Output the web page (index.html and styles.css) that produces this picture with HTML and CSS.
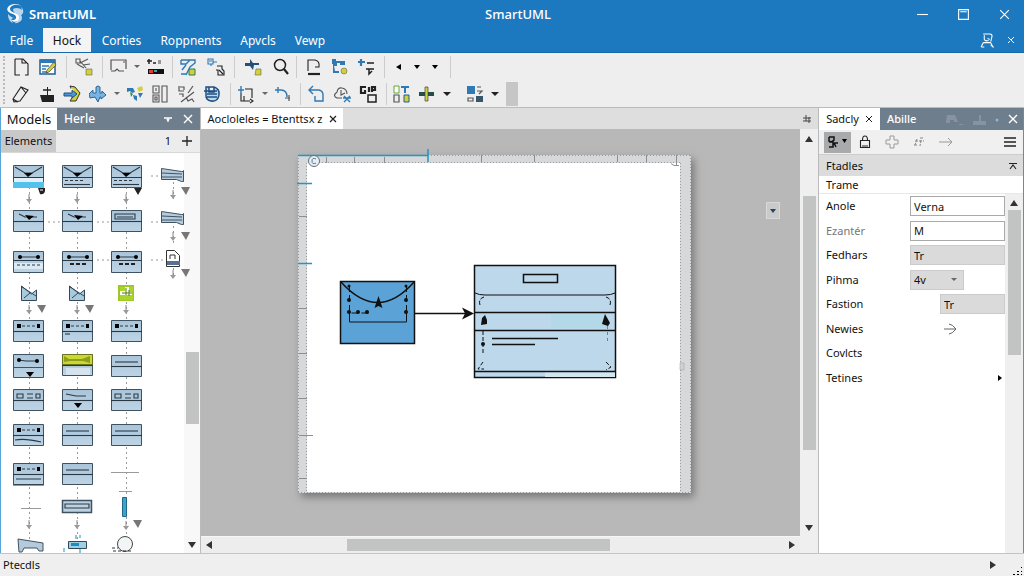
FILE: index.html
```html
<!DOCTYPE html>
<html lang="en">
<head>
<meta charset="utf-8">
<title>SmartUML</title>
<link rel="stylesheet" href="styles.css">
</head>
<body>
<div class="app">
  <header class="titlebar">
    <div class="brand">
      <svg class="logo" viewBox="0 0 18 20"><path d="M15 3C11-1 3 1 3 5c0 5 12 3 11 9-1 4-7 5-11 2 7 1 8-4 3-6C1 9-1 6 1 3 4-1 12-1 15 3z" fill="#fff"/><path d="M6 5c3-2 7-1 9 1l-1-3c3 2 3 7 0 8 3 4-1 9-7 8 5-2 6-5 4-8-2-2-5-2-5-6zM1 10c0 5 2 8 5 9-3-4-1-5 2-5-3 0-5-2-7-4z" fill="#b9d6ee"/></svg>
      <span>SmartUML</span>
    </div>
    <h1 class="title">SmartUML</h1>
    <div class="window-buttons">
      <button aria-label="Minimize"><svg viewBox="0 0 12 12"><path d="M1 6h10"/></svg></button>
      <button aria-label="Maximize"><svg viewBox="0 0 12 12"><path d="M1.500 1.500h9v9h-9zM3 3.500h6"/></svg></button>
      <button aria-label="Close"><svg viewBox="0 0 12 12"><path d="M2 2l8 8M10 2l-8 8"/></svg></button>
    </div>
  </header>

  <nav class="menubar">
    <button class="menu m-file">Fdle</button>
    <button class="menu m-home active">Hock</button>
    <button class="menu m-cort">Corties</button>
    <button class="menu m-ropp">Roppnents</button>
    <button class="menu m-apvc">Apvcls</button>
    <button class="menu m-view">Vewp</button>
    <div class="menu-right">
      <button aria-label="Account"><svg class="ic-user" viewBox="0 0 14 14"><path d="M3 1h6q3 0 2 3l-1 4M4 2v4q1 2 4 1M7 5l2 1M3 9h7M3 9l-2 4M10 9l2 4h1M1 13h3M10 11l2 2"/></svg></button>
      <button aria-label="Collapse"><svg class="ic-small" viewBox="0 0 8 8"><path d="M1 1l6 6M7 1L4 4M1 7l2-2"/></svg></button>
    </div>
  </nav>

  <div class="toolbar" role="toolbar">
    <div class="tool-row">
      <button class="tool" aria-label="New"><svg viewBox="0 0 20 20"><path class="k thin" d="M4 2h8l5 5v11h-3M4 2v16h5M11 2v4h4"/></svg></button>
      <button class="tool" aria-label="Edit"><svg viewBox="0 0 20 20"><path fill="#fff" stroke="#1f5f97" stroke-width="1.500" d="M3 3h15v14H3z"/><path class="bf" d="M3 2h15v4H3z"/><path class="b" d="M5 9h7M5 12h4M5 15h6"/><path class="y" stroke="#333" stroke-width=".6" d="M10 13l7-8 2 3-7 7-3 1z"/></svg></button>
      <i class="sep wide"></i>
      <button class="tool" aria-label="Link"><svg viewBox="0 0 20 20"><path class="g thin" d="M1 2h4v4H1zM5 6l8-4M5 4l6 7M8 8l7-1M2 7l7 4"/><path class="y" stroke="#665" stroke-width=".6" d="M11 12h6v6h-6z"/></svg></button>
      <i class="sep"></i>
      <button class="tool" aria-label="Shape"><svg viewBox="0 0 20 20"><path class="g" d="M2 13V3h15v9M2 14h4l2-2 2 2h5M14 5h2"/></svg></button>
      <i class="caret soft"></i>
      <button class="tool" aria-label="Color"><svg viewBox="0 0 20 20"><path class="k" d="M2 4h5M4 2v5M8 6h3"/><path fill="#999" d="M13 3h3v4h-3z"/><path fill="#111" d="M3 12h16v5H3z"/><path fill="#e5402f" d="M4 13h4v3H4z"/><path fill="#3aa6b5" d="M9 13h3v2H9z"/></svg></button>
      <i class="sep"></i>
      <button class="tool" aria-label="Diagram"><svg viewBox="0 0 20 20"><path class="b" d="M2 3h14v3l-5 4-4 8M2 3v4h5l4-4M3 13l4-5M2 17h5"/><path class="y" stroke="#2a7a5a" d="M10 12h6v6h-6z"/></svg></button>
      <button class="tool" aria-label="Relation"><svg viewBox="0 0 20 20"><path class="b thin" d="M3 2h5v5H3zM4 4h3M8 5h4M6 7v2"/><path class="k thin" d="M12 9h5v3l2 2v4h-6v-5h-2M14 13l4 4"/></svg></button>
      <i class="sep wide"></i>
      <button class="tool" aria-label="Add"><svg viewBox="0 0 20 20"><path fill="#234f7a" d="M2 6h5V2l3 4h6v2h-5l-1 5-3-4H2z"/><path class="y" stroke="#665" stroke-width=".6" d="M13 12h5v6h-6z"/></svg></button>
      <button class="tool" aria-label="Search"><svg viewBox="0 0 20 20"><circle class="k" cx="11" cy="8" r="5.500"/><path class="k heavy" d="M15 12l4 5"/></svg></button>
      <i class="sep"></i>
      <button class="tool" aria-label="Page"><svg viewBox="0 0 20 20"><path class="k thin" d="M5 14V3h7q5 1 4 7h-4"/><path class="k heavy" d="M5 17h12"/></svg></button>
      <button class="tool" aria-label="Tree"><svg viewBox="0 0 20 20"><path class="bf" d="M3 2h4v2h9v4h-5V6H8v3H5l1 5h4v2H4V7H3z"/><circle class="y" stroke="#665" stroke-width=".6" cx="15" cy="14" r="3"/></svg></button>
      <button class="tool" aria-label="Insert"><svg viewBox="0 0 20 20"><path class="b heavy" d="M3 5h7M6 2v7"/><path class="k" d="M12 6h7M11 12h8M14 12v5l3-3"/></svg></button>
      <i class="sep wide"></i>
      <button class="mini" aria-label="Previous"><svg viewBox="0 0 6 6"><path d="M5 0v6L0 3z"/></svg></button>
      <button class="mini" aria-label="Next"><svg viewBox="0 0 6 6"><path d="M0 1h6L3 5z"/></svg></button>
      <button class="mini" aria-label="More"><svg viewBox="0 0 6 6"><path d="M0 1h6L3 5z"/></svg></button>
      <i class="sep wide"></i>
    </div>
    <div class="tool-row">
      <button class="tool" aria-label="Erase"><svg viewBox="0 0 20 20"><path class="k thin" d="M2 15L10 3l7 3-8 11-6 1zM10 3l5 6M2 15l5 3"/></svg></button>
      <button class="tool" aria-label="Stamp"><svg viewBox="0 0 20 20"><path fill="#222" d="M3 11h14v7H5zM10 3h1v8h-1z"/><path class="k" d="M6 6h8"/></svg></button>
      <button class="tool" aria-label="Export"><svg viewBox="0 0 20 20"><path class="y" stroke="#333" d="M7 2l5 1 5 6-4 8H7l4-6z"/><path fill="#fff" d="M8 4l3 2v3H8z"/><path fill="#4c96d8" stroke="#1f4f80" d="M1 9h8V6l5 4-5 4v-2H1z"/></svg></button>
      <button class="tool" aria-label="Move"><svg viewBox="0 0 20 20"><path fill="#79b3e0" stroke="#27679f" d="M0 10l4-4v3h3V3l2-1 2 1v6h2V7l4 4-5 4v-2h-1l-2 5-3-5-5 1z"/></svg></button>
      <i class="caret soft"></i>
      <button class="tool" aria-label="Sync"><svg viewBox="0 0 20 20"><path class="bf" d="M2 4h6l2 4-3 1-2-2-3 1zM8 11l4 1v5l-3-2zM13 9h5l-3 5z"/><path class="y" d="M12 4l5-2 1 4-4 2z"/><path fill="#3a8b42" d="M5 8l3 2-2 3z"/></svg></button>
      <button class="tool" aria-label="Columns"><svg viewBox="0 0 20 20"><path class="g thin" d="M2 2h6v7H2zM2 11h6v7H2zM11 2h5v16h-5zM5 4v3M4 13h2v3H4z"/></svg></button>
      <button class="tool" aria-label="Snap"><svg viewBox="0 0 20 20"><path class="g" d="M2 2v5h5M3 3h4v3M2 10h4v3M16 2l-5 7M4 18L17 8M9 13l2 4 4-2 2 3"/></svg></button>
      <button class="tool" aria-label="Database"><svg viewBox="0 0 20 20"><path fill="#b9d8ed" stroke="#1f4f80" stroke-width="1.500" d="M3 3h8q6 2 5 8-1 7-8 6-5-1-5-5zM1 7h13M4 10h10M4 13h10M6 3v5h5V3"/></svg></button>
      <i class="sep"></i>
      <button class="tool" aria-label="Align"><svg viewBox="0 0 20 20"><path class="b" d="M1 6h6M4 2v7"/><path class="k thin" d="M8 5h7v9M4 9v8h9M7 12v5M13 15l3 2-3 2"/></svg></button>
      <i class="caret soft"></i>
      <button class="tool" aria-label="Route"><svg viewBox="0 0 20 20"><path class="b" d="M2 6h6M5 3v6M8 6q6 0 6 7"/><path class="g" d="M12 14h5M16 11v6"/></svg></button>
      <i class="sep"></i>
      <button class="tool" aria-label="Undo"><svg viewBox="0 0 20 20"><path class="b" d="M3 6h9q4 1 4 5v6H8v-5M6 2L2 6l4 4"/></svg></button>
      <button class="tool" aria-label="Cloud"><svg viewBox="0 0 20 20"><path class="g thin" d="M9 14H4q-5-2 0-6 1-5 5-4 5 1 5 6M8 6v5l4-2"/><path class="b" d="M11 12l6 6M17 12l-6 6M10 14h8"/></svg></button>
      <button class="tool" aria-label="Group"><svg viewBox="0 0 20 20"><path class="k heavy" d="M7 3H2v6h4V6M10 3v5M13 8V3h3v3h-3"/><path class="k" d="M9 11h8v7H9z"/></svg></button>
      <i class="sep"></i>
      <button class="tool" aria-label="Grid"><svg viewBox="0 0 20 20"><path fill="#fff" stroke="#65a832" d="M1 2h5v7H1z"/><path class="g" d="M1 11h5v7H1z"/><path class="bf" d="M8 2h8v2h-3v5h-2V4H8z"/><path class="y" stroke="#1f5f97" d="M11 11h5v7h-5z"/></svg></button>
      <button class="tool" aria-label="Insert cross"><svg viewBox="0 0 20 20"><path fill="#234f4a" d="M0 8h15v4H0z"/><path class="y" stroke="#443" stroke-width=".7" d="M6 3h3v14H6z"/></svg></button>
      <i class="caret"></i>
      <i class="gap"></i>
      <button class="tool" aria-label="Layout"><svg viewBox="0 0 20 20"><path class="bf" d="M0 2h8v8H0z"/><path class="g" d="M10 3h4M10 7h5l-3 3M1 14h5v3H1z"/><path fill="#36566a" d="M9 12h7v6H9z"/></svg></button>
      <i class="caret"></i>
      <i class="grip"></i>
    </div>
  </div>

  <main class="workspace">
    <aside class="left">
      <div class="tabs">
        <button class="tab tab-models">Models</button>
        <button class="tab tab-dark">Herle</button>
        <span class="push"></span>
        <button class="tab-icon" aria-label="Menu"><svg viewBox="0 0 10 10"><path d="M1 4h8M4 5l1 2 1-2"/></svg></button>
        <button class="tab-icon" aria-label="Close panel"><svg viewBox="0 0 10 10"><path d="M1 1l8 8M9 1L1 9"/></svg></button>
      </div>
      <div class="subbar">
        <button class="elements">Elements</button>
        <span class="push"></span>
        <span class="count">1</span>
        <button class="plus" aria-label="Add element"><svg viewBox="0 0 10 10"><path d="M5 0v10M0 5h10"/></svg></button>
      </div>
      <div class="palette-area">
        <svg class="palette" viewBox="1 153 183 400" role="img" aria-label="Element palette">
          <defs>
            <linearGradient id="cell" x2="0" y2="1"><stop offset="0" stop-color="#a9c4d9"/><stop offset="1" stop-color="#bdd4e5"/></linearGradient>
            <g id="box"><path fill="url(#cell)" stroke="#3f5261" d="M.5.5h30v21H.5z"/><path class="ln" d="M0 11.500h31"/></g>
            <g id="mail"><path fill="url(#cell)" stroke="#3f5261" d="M.5.5h30v22H.5z"/><path class="ln" d="M1 12.500h30M2 2l10 6h7L29 2"/><path class="ln dash" d="M3 15.500h18"/><path class="ln" d="M2 19.500h26"/><path d="M11 8h9l-5 4z"/></g>
            <g id="arrow"><use href="#box"/><path class="ln" d="M6 4l6 3h12"/><path d="M12 5l9 1-5 4z"/></g>
            <g id="dots"><use href="#box"/><path class="ln dash" d="M9 6h14"/><path d="M4 4h4v4H4zM24 4h3v4h-3z"/></g>
            <g id="dotsb"><path fill="url(#cell)" stroke="#3f5261" d="M.5.5h30v21H.5z"/><path class="ln" d="M0 9.500h31M8 6h16"/><circle cx="7" cy="6" r="2"/><circle cx="25" cy="6" r="2"/><path fill="none" stroke="#222" stroke-width="2" stroke-dasharray="4 2" d="M8 13h16"/></g>
            <g id="line"><use href="#box"/><path class="ln" d="M4 7h23"/></g>
            <g id="boxes"><use href="#box"/><path class="ln" d="M4 5h6v4H4zM14 5h6M14 9h6M23 5h4v4h-4z"/></g>
            <g id="tab"><path fill="#b5cbdc" stroke="#3f5261" d="M.5.5l20 3h2v-1 11h-2l-5-2H.5zM1 5l20 1M1 9h20"/></g>
            <g id="down"><path fill="#777" d="M0 0h9L5 8z"/></g>
            <g id="tip"><path fill="none" stroke="#888" d="M3 0v6"/><path fill="#999" d="M0 5h6L3 9z"/></g>
            <g id="fold"><path fill="#a9cadd" stroke="#33495a" d="M.5 0v14.500h15V4l-5 4zM1 1l14 9M3 12l6-5"/></g>
          </defs>
          <path class="conn" d="M29.500 187V545M77.500 187V545M126.500 187V535M48 222h14M97 222h14M151 176h10M151 222h10M97 260h14M151 260h14"/>
          <path class="conn" d="M173.500 182v20M173.500 226v18M173.500 268v8"/>
          <use href="#mail" x="13" y="165"/><path d="M13 182h31v6H13z" fill="#54c1ec"/><path d="M14 178h29v4H14z" fill="#e4f0f6"/>
          <use href="#mail" x="62" y="165"/><use href="#mail" x="111" y="165"/>
          <path d="M38 188h7v3q-1 4-5 3zM134 188h8l-4 7z" fill="#222"/><path d="M40 190h3" stroke="#fff"/>
          <use href="#tab" x="161" y="168"/><use href="#down" x="181" y="187"/>
          <use href="#tip" x="26" y="194"/><use href="#tip" x="74" y="194"/><use href="#tip" x="123" y="194"/><use href="#tip" x="170" y="190"/>

          <use href="#arrow" x="13" y="210"/><use href="#arrow" x="62" y="210"/><use href="#box" x="111" y="210"/><path class="ln" d="M115 214h20v5h-20zM117 217h16"/>
          <use href="#tab" x="161" y="211"/><use href="#down" x="181" y="232"/><use href="#tip" x="170" y="232"/>

          <use href="#dotsb" x="13" y="251"/><path d="M14 263h29v6H14z" fill="#dcebf3"/><path class="ln dash" d="M17 265h25"/>
          <use href="#dotsb" x="62" y="251"/><use href="#dotsb" x="111" y="251"/>
          <path fill="#fff" stroke="#333" d="M166.500 250.500h8l5 5v11h-13zM170 259v-4h5v4"/><path d="M167 261h13v4h-13z" fill="#596f94"/>
          <use href="#down" x="181" y="269"/><use href="#tip" x="170" y="270"/>

          <use href="#fold" x="21" y="286"/><use href="#fold" x="69" y="286"/>
          <path fill="#fff" stroke="#9cc926" stroke-width="2" d="M119 286h14v14h-14z"/><path fill="#a9d52b" d="M120 287h5v4h-5zM129 287h4v5h-4zM120 295h13v5h-13z"/><path d="M122 293h10M126 288v7M129 290v6" fill="none" stroke="#567816"/>
          <use href="#down" x="37" y="305"/><use href="#down" x="85" y="305"/>
          <use href="#tip" x="26" y="305"/><use href="#tip" x="74" y="305"/><use href="#tip" x="123" y="305"/>

          <use href="#dots" x="13" y="320"/><use href="#dots" x="62" y="320"/><use href="#dots" x="111" y="320"/>
          <path class="ln" d="M65 334h5"/>
          <path fill="url(#cell)" stroke="#3f5261" d="M13.500 354.500h30v23h-30zM14 367.500h29"/><path class="ln" d="M18 360l8 1h10"/><circle cx="19" cy="360" r="2"/><circle cx="37" cy="361" r="2"/><path d="M26 372h8l-4 5z"/>
          <use href="#box" x="62" y="354"/><path fill="#cbd832" stroke="#69761d" d="M62.500 354.500h30v10h-30z"/><path d="M64 356l5 3h13l8-3v7l-7-2H70l-6 1z" fill="#8f9c20"/><path d="M66 368h24v7H66z" fill="#d4e3ed"/>
          <use href="#line" x="111" y="355"/>
          <use href="#boxes" x="13" y="389"/><use href="#box" x="62" y="389"/><path class="ln" d="M66 394l10 2h10"/><path d="M74 403h8l-4 5z"/><use href="#boxes" x="111" y="389"/>
          <use href="#dots" x="13" y="424"/><path class="ln" d="M15 440q10-2 26 2"/><use href="#line" x="62" y="424"/><use href="#line" x="111" y="424"/>
          <use href="#dots" x="13" y="463"/><path class="ln" d="M16 479h25M13 485h31"/><use href="#line" x="62" y="463"/>
          <path stroke="#999" d="M111 472.500h28M21 508.500h20M119 491.500h13"/>
          <path fill="#bcd1e1" stroke="#3f5261" stroke-width="1.500" d="M62.500 500.500h29v12h-29z"/><path class="ln" d="M65 504h24v4H65z"/>
          <path fill="#35a5d2" stroke="#236888" d="M122.500 497.500h4v19h-4z"/>
          <use href="#tip" x="26" y="520"/><use href="#tip" x="74" y="520"/><use href="#tip" x="123" y="521"/><use href="#down" x="133" y="520"/>
          <path fill="#b5cbdc" stroke="#3f5261" d="M18 539l25 4v8h-4l-2-3H24l-2 4h-3z"/>
          <path fill="#9ed0e5" stroke="#33495a" d="M68.500 541.500h18v7h-18z"/><path d="M71 543h8v3h-8z" fill="#168fc7"/><path d="M76 535v4M80 535v3M64 548v4M80 549v4" stroke="#168fc7"/>
          <circle cx="125" cy="544" r="7.500" fill="#f2f5f6" stroke="#444"/><path class="ln dash" d="M112 548h6M113 551h20"/>
        </svg>
        <div class="vscroll left-scroll">
          <span class="thumb"></span>
          <svg class="arr" viewBox="0 0 8 8"><path d="M0 1h8L4 7z"/></svg>
        </div>
      </div>
    </aside>

    <section class="center">
      <div class="doc-tabs">
        <button class="doc-tab">Aocloleles = Btenttsx z <svg viewBox="0 0 8 8"><path d="M1 1l6 6M7 1L1 7"/></svg></button>
        <svg class="pin" viewBox="0 0 10 10"><path d="M1 4h8M1 7h8M4 1v6M7 3v6"/></svg>
      </div>
      <div class="canvas">
        <svg class="sheet" viewBox="298 155 393 338" role="img" aria-label="Diagram">
          <path fill="#d6d8d9" d="M298 155h393v338H298z"/>
          <path fill="#fff" d="M307 163h373v329H307z"/>
          <path fill="none" stroke="#9a9d9f" stroke-dasharray="1 2" d="M298.500 155v338M306.500 163v329M680.500 163v329M690.500 155v338M428 155.500h263M310 162.500h370M298 492.500h393"/>
          <path fill="none" stroke="#8a8f92" d="M299 216.500h8M299 308.500h8M299 353.500h8M299 398.500h8M299 435.500h14M299 478.500h8M326.500 157v6M354.500 157v6M384.500 157v6M481.500 155v7M534.500 155v7M617.500 155v7M646.500 155v7M676.500 155v10M671 163.500l3 2h5"/>
          <path fill="none" stroke="#2197c4" stroke-width="1.500" d="M298 155.500h130M428 149v13M297 183.500h15M298 263.500h14"/>
          <circle cx="314" cy="161" r="5.500" fill="#e9eef3" stroke="#66737e"/><path d="M316 159q-4-2-4 2t4 2" fill="none" stroke="#54789b"/>
          <path fill="#cfd3d5" stroke="#999" stroke-width=".5" d="M680 363h4v7h-4z"/>

          <g stroke="#111">
            <path fill="#5ba3d6" stroke-width="1.500" d="M340.500 281.500h74v62h-74z"/>
            <path fill="none" stroke-width="1.500" d="M341 282q37 41 73 0"/>
            <path fill="none" d="M349.500 312v10h57v-10"/>
            <path fill="none" stroke-dasharray="7 3" d="M349.500 285v28h20M406.500 285v28"/>
            <path fill="none" stroke-width="1.500" d="M415 313.500h52"/>
          </g>
          <path fill="#111" d="M378.500 296l4 12-4-2-4 2zM474 313.500l-12-6 3 6-3 6z"/>
          <g fill="#111"><circle cx="349" cy="286" r="1.500"/><circle cx="349" cy="300" r="2"/><circle cx="349" cy="312" r="2"/><circle cx="358" cy="312" r="2"/><circle cx="367" cy="312" r="2"/><circle cx="406" cy="286" r="1.500"/><circle cx="406" cy="300" r="2"/><circle cx="406" cy="312" r="2"/></g>

          <path fill="#bdd7eb" stroke="#111" stroke-width="1.500" d="M474.500 265.500h141v112h-141z"/>
          <path fill="#b3d8e8" d="M551 314h56v14h-56z"/>
          <path fill="#d3e6ee" d="M545 372h70v5h-70z"/>
          <path fill="none" stroke="#111" stroke-width="1.500" d="M523.500 274.500h34v8h-34zM475 312.500h140M475 330.500h140M475 371.500h140M492 338.500h66M492 344.500h43"/>
          <path fill="none" stroke="#111" d="M475 293q4 2 10 2h120q6 0 10-2"/>
          <path fill="none" stroke="#111" stroke-dasharray="4 2" d="M484 297q-6 2-4 8M606 297q6 2 4 8M483 331v22M483 362l-5 7h6M606 362l5 5-5 3"/>
          <path fill="none" stroke="#3a9b9a" stroke-dasharray="3 3" d="M607.500 326v16"/>
          <path fill="#111" d="M481 325l1-7 3-3 2 5v4zM605 314l5 9-2 3-6-2z"/><circle cx="483" cy="344" r="2" fill="#111"/>
        </svg>
        <button class="float" aria-label="Show options"><svg viewBox="0 0 6 6"><path d="M0 1h6L3 5z"/></svg></button>
      </div>
      <div class="vscroll center-v">
        <svg class="arr" viewBox="0 0 8 8"><path d="M0 7h8L4 1z"/></svg>
        <span class="thumb"></span>
        <svg class="arr" viewBox="0 0 8 8"><path d="M0 1h8L4 7z"/></svg>
      </div>
      <div class="hscroll">
        <svg class="arr" viewBox="0 0 8 8"><path d="M7 0v8L1 4z"/></svg>
        <span class="thumb"></span>
        <svg class="arr" viewBox="0 0 8 8"><path d="M1 0v8l6-4z"/></svg>
      </div>
    </section>

    <aside class="right">
      <div class="tabs">
        <button class="tab tab-models">Sadcly <svg class="x" viewBox="0 0 8 8"><path d="M1 1l6 6M7 1L1 7"/></svg></button>
        <button class="tab tab-dark">Abille</button>
        <span class="push"></span>
        <svg class="ghost" viewBox="0 0 60 14"><path fill="#8793a0" d="M4 3h8l3 7h-4V8H7v3H3zM16 12h4v1h-4zM30 9h13v4H30zM36 3h2v6h-2z"/><circle cx="54" cy="8" r="1.500" fill="#8bb5d9"/></svg>
        <button class="tab-icon" aria-label="Close panel"><svg viewBox="0 0 10 10"><path d="M1 1l8 8M9 1L1 9"/></svg></button>
      </div>
      <div class="prop-tools">
        <button class="sel" aria-label="Mode"><svg viewBox="0 0 22 14"><path d="M2 2h5v3L4 7h2v5H2M2 2v4l2 1M7 8h4M7 8l2 4" fill="none" stroke="#111" stroke-width="1.500"/><path d="M15 4h5l-2.500 4z"/></svg></button>
        <button aria-label="Lock"><svg viewBox="0 0 14 14"><path class="k thin" d="M2.500 5.500h9v7h-9zM4.500 5q0-4 2.500-4t2.500 4M4 11h6"/></svg></button>
        <button aria-label="Add"><svg viewBox="0 0 14 14"><path fill="none" stroke="#999" d="M5 1h4v4h4v4H9v4H5V9H1V5h4z"/></svg></button>
        <button aria-label="Sort"><svg viewBox="0 0 14 14"><path fill="none" stroke="#888" stroke-dasharray="3 1" d="M8 3h4M3 6h9M2 10h4M9 5l-1 6M5 4l-2 6"/></svg></button>
        <button aria-label="Go"><svg viewBox="0 0 14 14"><path fill="none" stroke="#999" d="M0 7h13M9 3l4 4-4 4"/></svg></button>
        <span class="push"></span>
        <button aria-label="Options"><svg viewBox="0 0 14 14"><path class="k" d="M1 3h12M1 7h12M1 11h12"/></svg></button>
      </div>
      <div class="group"><span>Ftadles</span><svg viewBox="0 0 8 8"><path class="k thin" d="M0 1.500h8M1 7l3-4 3 4"/></svg></div>
      <div class="subgroup">Trame</div>
      <div class="props">
        <form class="rows">
          <label for="p1">Anole</label><input id="p1" value="Verna">
          <label class="dim" for="p2">Ezantér</label><input id="p2" value="M">
          <label for="p3">Fedhars</label><input class="grey" id="p3" value="Tr">
          <label for="p4">Pihma</label><div class="pick"><select id="p4"><option>4v</option></select><i class="caret soft"></i></div>
          <label for="p5">Fastion</label><input class="grey short" id="p5" value="Tr">
          <label for="p6">Newies</label><button type="button" class="go" id="p6" aria-label="Open"><svg viewBox="0 0 14 12"><path d="M1 6h12M6 1q3 0 7 5-4 5-7 5"/></svg></button>
          <span class="wide-label">Covlcts</span>
          <span>Tetines</span><button type="button" class="more" aria-label="Expand"><svg viewBox="0 0 6 6"><path d="M1 0v6l4-3z"/></svg></button>
        </form>
        <div class="vscroll right-scroll">
          <svg class="arr" viewBox="0 0 8 8"><path d="M0 7h8L4 1z"/></svg>
          <span class="thumb"></span>
        </div>
      </div>
    </aside>
  </main>

  <footer class="status">
    <span>Ptecdls</span>
    <span class="push"></span>
    <svg class="arr" viewBox="0 0 8 8"><path d="M1 0v8l6-4z"/></svg>
    <svg class="resize" viewBox="0 0 10 10"><path d="M8 1h1v1H8zM4 5h2v1H4zM8 5h1v1H8zM0 8h2v1H0zM4 8h2v1H4zM8 8h1v1H8z"/></svg>
  </footer>
</div>
</body>
</html>
```
FILE: styles.css
```css
* { box-sizing: border-box; }
html, body { height: 100%; }
body {
  margin: 0;
  font-family: "Noto Sans", "Open Sans", sans-serif;
  font-size: 11px;
  line-height: 16px;
  color: #111;
}
button, input, select { font: inherit; color: inherit; margin: 0; }
button { background: none; border: 0; padding: 0; display: flex; align-items: center; justify-content: center; white-space: nowrap; }
svg { display: block; flex: none; }
.push { flex: 1; }
.k { fill: none; stroke: #222; stroke-width: 1.5; }
.b { fill: none; stroke: #2f79b5; stroke-width: 1.4; }
.g { fill: none; stroke: #555; stroke-width: 1.2; }
.k.thin, .b.thin, .g.thin { stroke-width: 1.1; }
.k.heavy, .b.heavy { stroke-width: 2.2; }
.bf { fill: #2f79b5; }
.y { fill: #d2cf3c; }

.app { height: 100vh; display: flex; flex-direction: column; background: #ededed; }

.titlebar {
  height: 28px;
  background: #1c79c0;
  color: #fff;
  display: grid;
  grid-template-columns: 1fr auto 1fr;
  align-items: center;
}
.brand { display: flex; align-items: center; gap: 4px; padding-left: 7px; font-size: 13px; font-weight: 600; }
.logo { width: 18px; height: 20px; }
.title { margin: 0; padding-left: 12px; font-size: 13px; font-weight: 500; }
.window-buttons { display: flex; justify-content: flex-end; padding-right: 13px; gap: 28px; }
.window-buttons svg { width: 13px; height: 13px; fill: none; stroke: #fff; }

.menubar { height: 25px; background: #1c79c0; border-bottom: 1px solid #1767a8; color: #fff; display: flex; }
.menu { font-size: 12px; padding-top: 2px; }
.menu.active { background: #f4f4f4; color: #111; }
.m-file { width: 43px; }
.m-home { width: 48px; }
.m-cort { width: 61px; }
.m-ropp { width: 78px; }
.m-apvc { width: 56px; }
.m-view { width: 48px; }
.menu-right { margin-left: auto; display: flex; align-items: center; gap: 12px; padding-right: 9px; }
.menu-right svg { fill: none; stroke: #fff; }
.ic-user { width: 15px; height: 15px; }
.ic-small { width: 8px; height: 8px; }

.toolbar { background: #eee; border-bottom: 1px solid #bbb; padding-left: 8px; position: relative; }
.toolbar::before { content: ""; position: absolute; left: 3px; top: 3px; bottom: 3px; border-left: 2px dotted #bbb; }
.tool-row { height: 27px; display: flex; align-items: center; }
.tool { width: 26px; height: 26px; }
.tool svg { width: 20px; height: 20px; }
.sep { width: 8px; height: 22px; background: linear-gradient(#ccc, #ccc) center / 1px 100% no-repeat; }
.sep.wide { width: 12px; }
.gap { width: 12px; }
.caret { width: 10px; display: flex; justify-content: center; }
.caret::before { content: ""; border: 4px solid transparent; border-top: 4px solid #222; border-bottom: 0; }
.caret.soft::before { border-width: 3px; border-top-color: #666; border-bottom: 0; }
.mini { width: 18px; height: 20px; }
.mini svg { width: 6px; height: 6px; }
.grip { width: 12px; height: 24px; margin-left: 6px; background: #c6c6c6; }

.workspace {
  flex: 1;
  min-height: 0;
  display: grid;
  grid-template-columns: 201px 1fr 206px;
  grid-template-rows: minmax(0, 1fr);
}
.left, .right { display: flex; flex-direction: column; min-height: 0; background: #fff; }
.left { border-left: 1px solid #5aa5d8; border-right: 1px solid #bbb; }
.right { border-left: 1px solid #bbb; border-right: 1px solid #4b93c8; }
.tabs { height: 22px; background: #6f7e8d; color: #fff; display: flex; align-items: center; flex: none; }
.tab { height: 22px; font-size: 12px; padding: 0 7px; gap: 6px; }
.tab-models { background: #fff; color: #111; }
.left .tab-models { font-size: 13px; width: 56px; }
.right .tab-models { width: 61px; }
.tab-dark { font-weight: 500; }
.right .tab { font-size: 11px; }
.x { width: 8px; height: 8px; fill: none; stroke: #222; }
.tab-icon { width: 20px; height: 20px; }
.tab-icon svg { width: 10px; height: 10px; fill: none; stroke: #fff; stroke-width: 1.4; }
.left .tab-icon:last-child { margin-right: 2px; }
.ghost { width: 60px; height: 14px; }
.subbar { height: 23px; display: flex; align-items: center; background: #ececec; border-bottom: 1px solid #d8d8d8; flex: none; }
.elements { height: 22px; width: 55px; background: #c9c9c9; }
.count { width: 12px; text-align: center; }
.plus { width: 26px; height: 20px; }
.plus svg { width: 10px; height: 10px; fill: none; stroke: #222; stroke-width: 1.3; }
.palette-area { flex: 1; min-height: 0; display: flex; overflow: hidden; }
.palette { width: 183px; height: 400px; overflow: visible; position: relative; z-index: 1; }
.palette .ln { fill: none; stroke: #2b3944; stroke-width: 1.1; }
.palette .dash { stroke-dasharray: 3 2; }
.palette .conn { fill: none; stroke: #999; stroke-dasharray: 2 3; }

.vscroll { background: #efefef; display: flex; flex-direction: column; align-items: center; }
.thumb { background: #c2c4c4; flex: none; }
.arr { width: 8px; height: 8px; fill: #333; }
.left-scroll { flex: 1; background: #f8f8f8; }
.left-scroll .thumb { width: 13px; height: 18%; margin-top: 199px; }
.left-scroll .arr { margin-top: auto; margin-bottom: 4px; }

.center { display: grid; grid-template-columns: 1fr 18px; grid-template-rows: 21px minmax(0, 1fr) 17px; min-width: 0; }
.doc-tabs { grid-column: 1 / 3; display: flex; align-items: center; justify-content: space-between; background: #dedede; padding-right: 6px; }
.doc-tab { background: #fff; height: 21px; width: 142px; gap: 6px; }
.doc-tab svg { width: 8px; height: 8px; fill: none; stroke: #222; stroke-width: 1.2; }
.pin { width: 10px; height: 10px; fill: none; stroke: #444; }
.canvas { background: #b8b8b8; padding: 26px 20px 0 97px; display: flex; justify-content: space-between; align-items: flex-start; overflow: hidden; min-width: 0; }
.sheet { width: 393px; height: 338px; overflow: visible; box-shadow: 3px 4px 8px #777; }
.float { width: 14px; height: 17px; margin-top: 47px; background: #cacaca; border: 1px solid #d8d8d8; }
.float svg { width: 6px; height: 6px; fill: #246; }
.center-v { grid-row: 2 / 4; grid-column: 2; padding: 6px 0 21px; }
.center-v .thumb { width: 13px; height: 64%; margin-top: 53px; margin-bottom: auto; }
.hscroll { background: #ededed; display: flex; align-items: center; padding: 0 4px; border-top: 1px solid #f6f6f6; }
.hscroll .thumb { width: 44.5%; height: 12px; margin-left: 134px; margin-right: auto; }

.prop-tools { height: 25px; display: flex; align-items: center; background: #f0f0f0; padding: 0 6px 0 5px; border-bottom: 1px solid #ccc; flex: none; }
.prop-tools button { width: 27px; height: 21px; }
.prop-tools button:last-child { width: 14px; }
.prop-tools svg { width: 14px; height: 14px; }
.prop-tools .sel { background: #a9aaac; }
.prop-tools .sel svg { width: 22px; }
.group { height: 21px; display: flex; align-items: center; justify-content: space-between; background: #dcdcdc; padding: 0 6px 0 7px; flex: none; }
.group svg { width: 8px; height: 8px; }
.subgroup { height: 18px; padding: 1px 7px; border-bottom: 1px solid #e8e8e8; flex: none; }
.props { flex: 1; min-height: 0; display: flex; }
.rows {
  flex: 1;
  min-width: 0;
  display: grid;
  grid-template-columns: 84px 1fr;
  grid-template-rows: 24px 25px 24px 25px 24px 25px 24px 25px;
  align-content: start;
  align-items: center;
  padding-left: 7px;
}
.rows .dim { color: #777; }
.rows input, .rows select { width: 100%; height: 20px; border: 1px solid #aaa; border-radius: 0; background: #fff; padding: 0 3px; min-width: 0; }
.rows input.grey, .rows select { background: #dadada; border-color: #cbcbcb; }
.rows input.short { width: 65px; justify-self: end; }
.rows select { appearance: none; }
.pick { width: 54px; position: relative; display: flex; }
.pick .caret { position: absolute; right: 5px; top: 8px; pointer-events: none; }
.wide-label { grid-column: 1 / 3; }
.go { width: 16px; height: 16px; margin-left: 32px; }
.go svg { width: 14px; height: 12px; fill: none; stroke: #666; }
.more { justify-self: end; width: 10px; height: 16px; }
.more svg { width: 6px; height: 6px; }
.right-scroll { width: 18px; padding-top: 5px; }
.right-scroll .thumb { width: 13px; height: 41%; margin-top: 3px; }

.status { height: 23px; display: flex; align-items: center; gap: 16px; padding: 0 1px 0 3px; background: #efefef; border-top: 1px solid #c4c4c4; }
.resize { width: 10px; height: 10px; align-self: flex-end; }
```
